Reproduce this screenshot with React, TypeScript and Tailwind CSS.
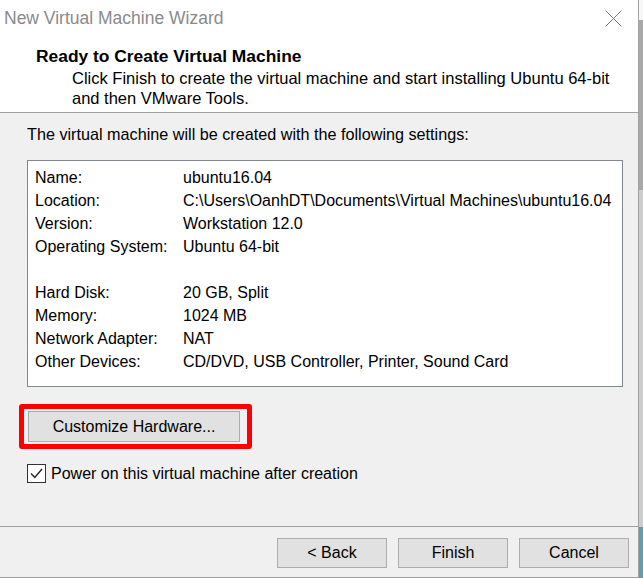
import React from "react";

const rows: [string, string][] = [
  ["Name:", "ubuntu16.04"],
  ["Location:", "C:\\Users\\OanhDT\\Documents\\Virtual Machines\\ubuntu16.04"],
  ["Version:", "Workstation 12.0"],
  ["Operating System:", "Ubuntu 64-bit"],
  ["", ""],
  ["Hard Disk:", "20 GB, Split"],
  ["Memory:", "1024 MB"],
  ["Network Adapter:", "NAT"],
  ["Other Devices:", "CD/DVD, USB Controller, Printer, Sound Card"],
];

function Btn({ label, className = "" }: { label: string; className?: string }) {
  return (
    <div
      className={
        "flex items-center justify-center bg-[#e1e1e1] border border-[#adadad] text-[16px] text-black " +
        className
      }
    >
      {label}
    </div>
  );
}

export default function App() {
  return (
    <div
      className="w-[643px] h-[578px] flex overflow-hidden bg-[#f0f0f0] text-black"
      style={{ fontFamily: '"Liberation Sans", Arial, sans-serif' }}
    >
      <div className="w-[639px] h-[578px] flex flex-col border-r border-b border-[#a0a0a0] bg-[#f0f0f0]">
        {/* header */}
        <div className="bg-white h-[113px] border-b border-[#a0a0a0] flex flex-col">
          <div className="h-[37px] flex items-center justify-between pl-[4px] pr-[16px]">
            <span className="text-[17.5px] text-[#8a8a8a]">New Virtual Machine Wizard</span>
            <svg width="17" height="17" viewBox="0 0 17 17">
              <path d="M0.5 0.5 L16.5 16.5 M16.5 0.5 L0.5 16.5" stroke="#7a7a7a" strokeWidth="1" fill="none" />
            </svg>
          </div>
          <div className="pl-[36px] mt-[9px] text-[17.4px] font-bold leading-[20px]">
            Ready to Create Virtual Machine
          </div>
          <div className="pl-[72px] mt-[2px] text-[16.5px] leading-[20px]">
            Click Finish to create the virtual machine and start installing Ubuntu 64-bit
            <br />
            and then VMware Tools.
          </div>
        </div>
        {/* body */}
        <div className="flex-1 flex flex-col pl-[27px]">
          <div className="mt-[11px] text-[16.2px] leading-[20px]">
            The virtual machine will be created with the following settings:
          </div>
          <div className="mt-[16px] w-[596px] h-[227px] bg-white border border-[#828790] pt-[5px] pl-[7px]">
            {rows.map(([k, v], i) => (
              <div key={i} className="flex h-[23px] items-center text-[16px]">
                <span className="w-[148px]">{k}</span>
                <span>{v}</span>
              </div>
            ))}
          </div>
          <div className="mt-[17px] -ml-[8px] w-[233px] h-[45px] border-[5px] border-[#ff0000] rounded-[3px] pl-[4px] pr-[7px] py-[2px]">
            <Btn label="Customize Hardware..." className="w-full h-full" />
          </div>
          <div className="mt-[15px] flex items-center gap-[5px]">
            <div className="w-[19px] h-[19px] border border-[#333] bg-white flex items-center justify-center">
              <svg width="15" height="15" viewBox="0 0 15 15">
                <path d="M2 7.5 L5.8 11.5 L13 3" stroke="#222" strokeWidth="1.4" fill="none" />
              </svg>
            </div>
            <span className="text-[16px] leading-[19px]">Power on this virtual machine after creation</span>
          </div>
        </div>
        {/* footer */}
        <div className="h-[51px] border-t border-[#a0a0a0] flex items-start justify-end gap-[11px] pt-[11px] pr-[9px]">
          <Btn label="< Back" className="w-[110px] h-[30px]" />
          <Btn label="Finish" className="w-[110px] h-[30px]" />
          <Btn label="Cancel" className="w-[110px] h-[30px]" />
        </div>
      </div>
      <div className="w-[4px] h-[578px] flex flex-col">
        <div className="h-[20px] bg-[#f7f7f7]" />
        <div className="h-[170px] bg-[#a8a8a8]" />
        <div className="h-[337px] bg-[#cdcdcd]" />
        <div className="flex-1 bg-[#5b9fb3]" />
      </div>
    </div>
  );
}
